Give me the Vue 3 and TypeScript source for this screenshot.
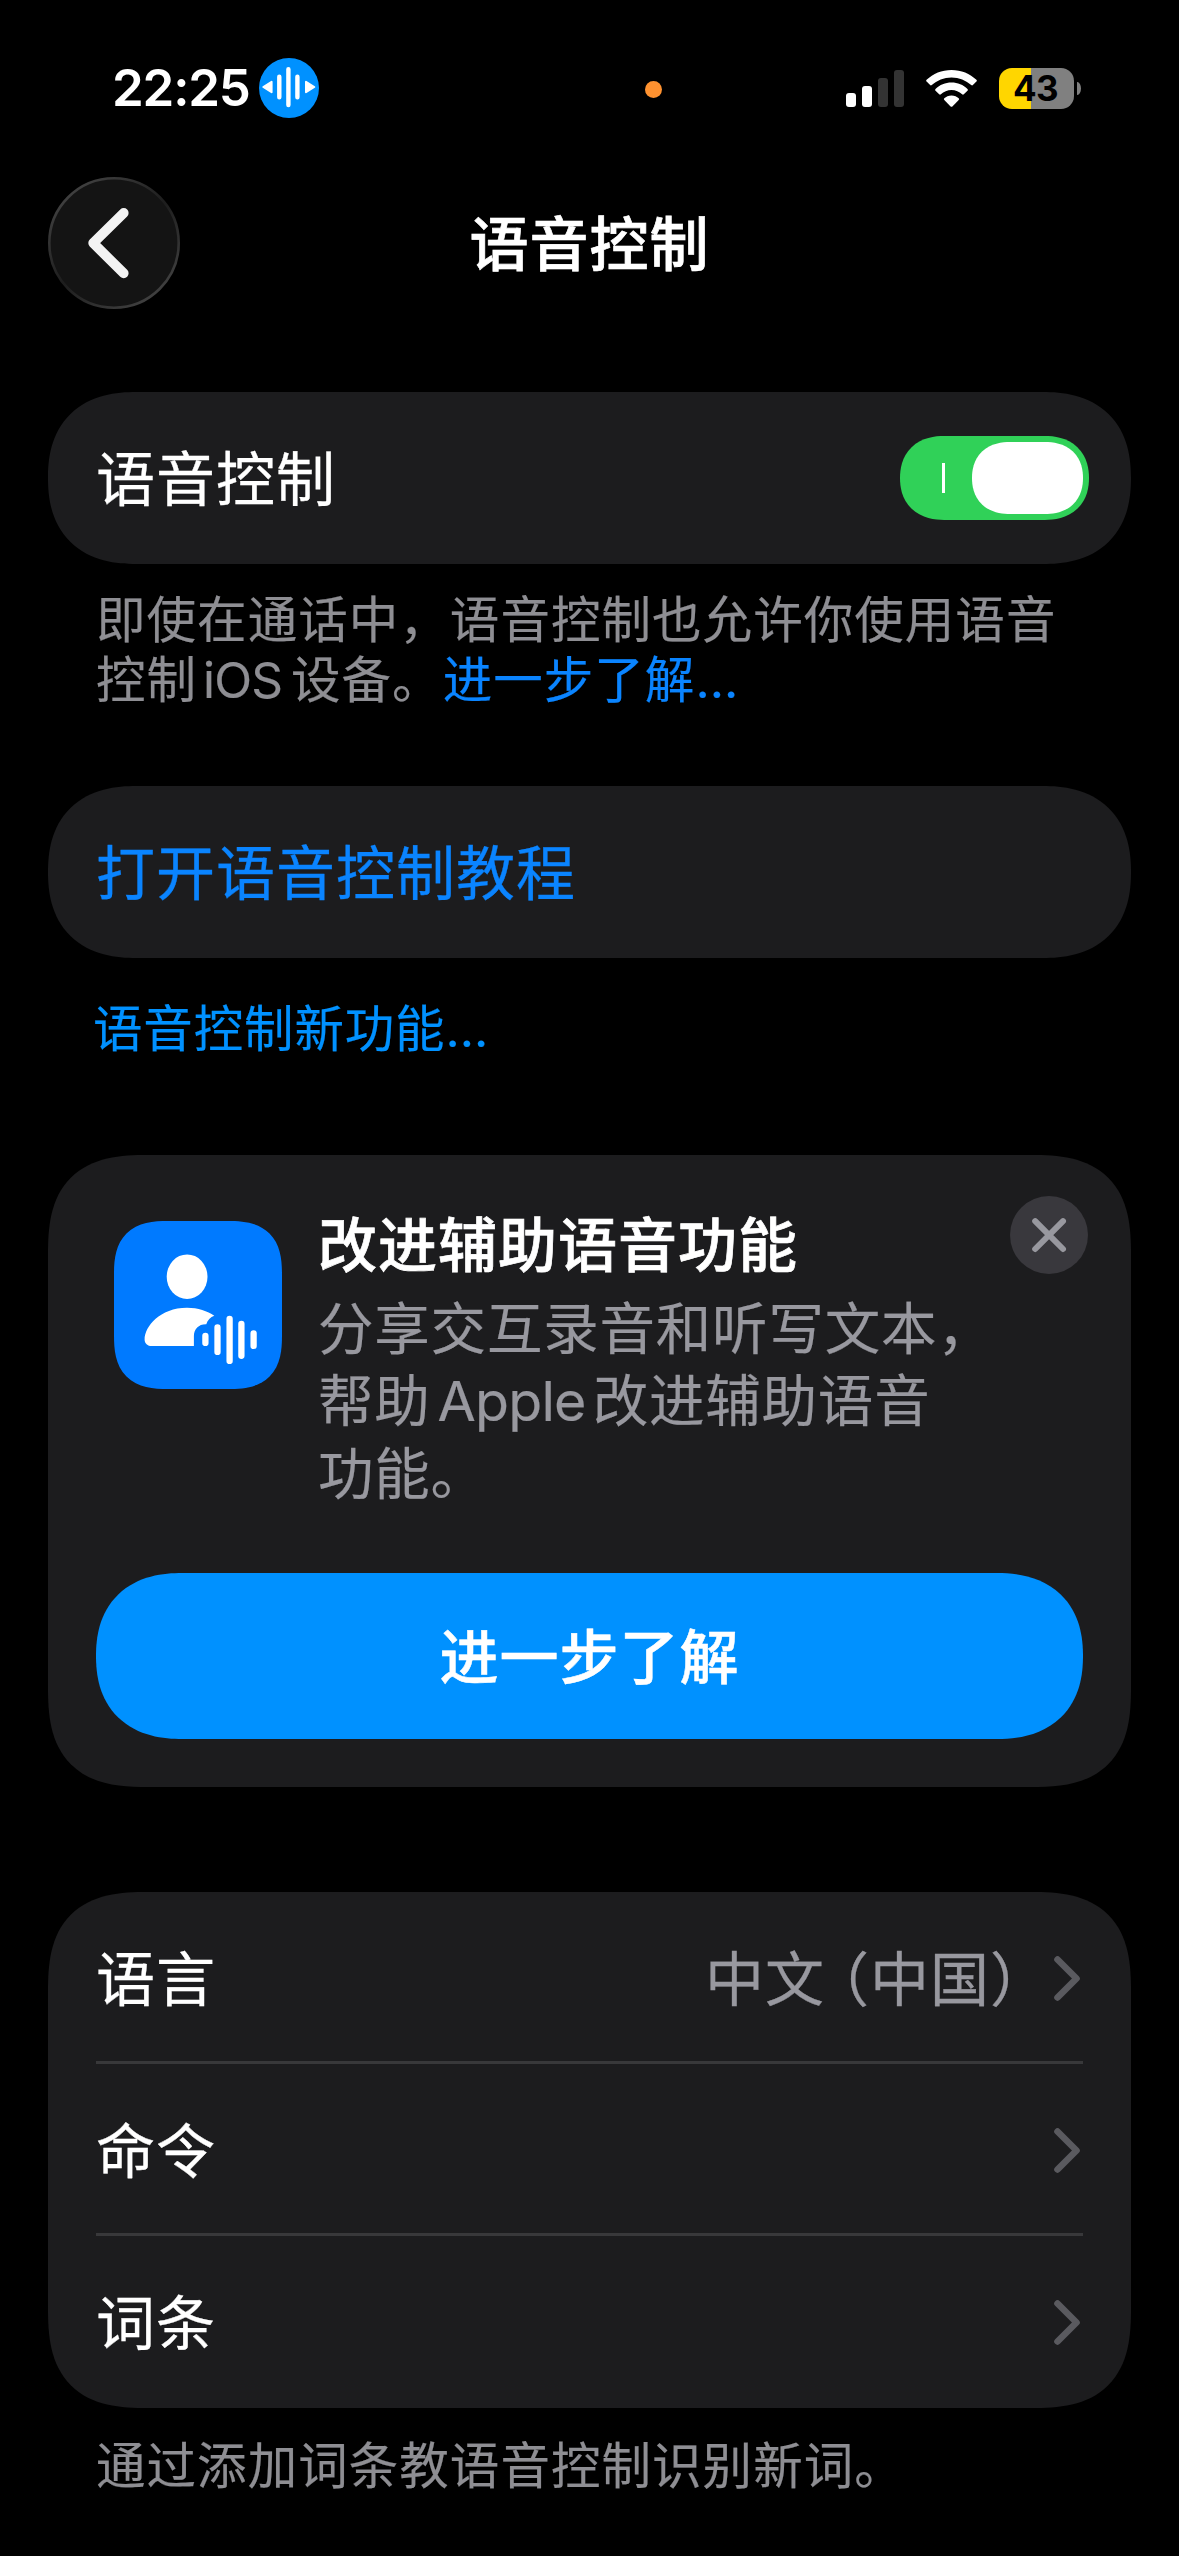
<script setup lang="ts">
interface Row {
  label: string
  language?: string
  region?: string
}

const rows: Row[] = [
  { label: '语言', language: '中文', region: '中国' },
  { label: '命令' },
  { label: '词条' },
]
</script>

<template>
  <div class="screen">
    <header class="status">
      <div class="status-left">
        <span class="time">22:25</span>
        <svg class="voice" viewBox="0 0 60 60">
          <circle cx="30" cy="30" r="30" fill="#0091ff" />
          <g stroke="#fff" stroke-width="4.4" stroke-linecap="round">
            <path d="M29.4 11.2V47M20.3 18.7V39.3M38.4 18.7V39.3" />
          </g>
          <g fill="#fff" stroke="#fff" stroke-width="2" stroke-linejoin="round">
            <path d="M4.3 29L12.6 23.8V34.2ZM55.3 29L47 23.8V34.2Z" />
          </g>
        </svg>
      </div>
      <span class="mic-dot"></span>
      <div class="status-right">
        <svg class="signal" viewBox="0 0 58 37">
          <rect x="0" y="23" width="10" height="14" rx="3" fill="#fff" />
          <rect x="16" y="16" width="10" height="21" rx="3" fill="#fff" />
          <rect x="32" y="8" width="10" height="29" rx="3" fill="#333" />
          <rect x="48" y="0" width="10" height="37" rx="3" fill="#333" />
        </svg>
        <svg class="wifi" viewBox="0 0 51 37">
          <g fill="#fff">
            <path d="M25.5 0C35.2 0 44 3.7 50.4 9.8Q51.3 10.7 50.4 11.6L46.9 15.1Q46.1 15.9 45.2 15.1C40 10.3 33.1 7.4 25.5 7.4C17.9 7.4 11 10.3 5.8 15.1Q4.9 15.9 4.1 15.1L.6 11.6Q-.3 10.7 .6 9.8C7 3.7 15.8 0 25.5 0Z" />
            <path d="M25.5 12.6C31.7 12.6 37.3 15 41.5 18.9Q42.4 19.8 41.5 20.7L37.8 24.3Q37 25.1 36.1 24.3C33.3 21.7 29.6 20.1 25.5 20.1C21.4 20.1 17.7 21.7 14.9 24.3Q14 25.1 13.2 24.3L9.5 20.7Q8.6 19.8 9.5 18.9C13.7 15 19.3 12.6 25.5 12.6Z" />
            <path d="M25.5 25.4C28.4 25.4 31 26.5 32.7 28.2Q33.5 29 32.7 29.9L26.4 36.4Q25.5 37.2 24.6 36.4L18.3 29.9Q17.5 29 18.3 28.2C20 26.5 22.6 25.4 25.5 25.4Z" />
          </g>
        </svg>
        <div class="battery"><span>43</span></div>
        <span class="battery-cap"></span>
      </div>
    </header>

    <nav class="nav">
      <button class="back" aria-label="返回">
        <svg viewBox="0 0 132 132">
          <defs>
            <linearGradient id="rim" x1="0.1" y1="0" x2="0.9" y2="1">
              <stop offset="0" stop-color="#484848" />
              <stop offset="0.5" stop-color="#1d1d1d" />
              <stop offset="1" stop-color="#484848" />
            </linearGradient>
          </defs>
          <circle cx="66" cy="66" r="64.7" fill="#141414" stroke="url(#rim)" stroke-width="2.6" />
          <path d="M75.7 36L45.2 66.1L75.7 96.3" fill="none" stroke="#f3f3f3" stroke-width="9.8" stroke-linecap="round" stroke-linejoin="round" />
        </svg>
      </button>
      <h1>语音控制</h1>
    </nav>

    <section class="card pill first">
      <span class="label">语音控制</span>
      <span class="toggle"><i class="on-mark"></i><i class="knob"></i></span>
    </section>
    <p class="note">即使在通话中，语音控制也允许你使用语音<br />控制<span class="ios">iOS</span>设备。<a>进一步了解<span class="dots">…</span></a></p>

    <section class="card pill tutorial">
      <span class="label link">打开语音控制教程</span>
    </section>
    <a class="news">语音控制新功能<span class="dots">…</span></a>

    <section class="card promo">
      <div class="promo-head">
        <svg class="app-icon" viewBox="0 0 168 168">
          <g fill="#fff">
            <ellipse cx="73.1" cy="55.7" rx="20.4" ry="22.3" />
            <path d="M38 125C33.5 125 30.6 122.4 30.6 118.4C30.6 105.5 46 86.7 73 86.7C84 86.7 93.5 90 100.3 94.7C96.5 96.2 93.3 99 92.3 103.3C85 103 79.9 108 79.9 115V125Z" />
          </g>
          <path d="M91.4 114.8V121.9M103.5 106.4V130.9M115.6 97.8V139.9M127.4 102.8V134.8M139.6 112.4V124.9" stroke="#fff" stroke-width="6.3" stroke-linecap="round" />
        </svg>
        <div class="promo-text">
          <h2>改进辅助语音功能</h2>
          <p>分享交互录音和听写文本，<br />帮助<span class="apple">Apple</span>改进辅助语音<br />功能。</p>
        </div>
        <button class="close" aria-label="关闭">
          <svg viewBox="0 0 78 78">
            <path d="M25.2 25.2L53 53M53 25.2L25.2 53" stroke="#98989f" stroke-width="6" stroke-linecap="round" />
          </svg>
        </button>
      </div>
      <button class="cta"><span>进一步了解</span></button>
    </section>

    <section class="card list">
      <div v-for="row in rows" :key="row.label" class="row">
        <span class="label">{{ row.label }}</span>
        <span v-if="row.language" class="value">{{ row.language }}<span class="paren">（</span>{{ row.region }}）</span>
        <svg class="chevron" viewBox="0 0 26 45">
          <path d="M3.5 3.5L22.5 22.5L3.5 41.5" fill="none" stroke="#5a5a5f" stroke-width="6.6" stroke-linecap="round" stroke-linejoin="round" />
        </svg>
      </div>
    </section>
    <p class="note tail">通过添加词条教语音控制识别新词。</p>
  </div>
</template>

<style>
html,
body {
  background: #000;
}
</style>

<style scoped>
.screen {
  box-sizing: border-box;
  width: 1179px;
  height: 2556px;
  padding: 0 48px;
  overflow: hidden;
  display: flex;
  flex-direction: column;
  background: #000;
  color: #fff;
  font-family: Inter, 'Noto Sans CJK SC', sans-serif;
}
h1,
h2,
p {
  margin: 0;
}
button {
  border: 0;
  padding: 0;
  background: none;
  color: inherit;
  font-family: inherit;
}
svg {
  display: block;
  flex: none;
}
.status {
  display: flex;
  align-items: center;
  height: 60px;
  margin-top: 58px;
  padding: 0 50px 0 64px;
  flex: none;
}
.status-left {
  display: flex;
  align-items: center;
  width: 533px;
}
.time {
  width: 147px;
  font-size: 51px;
  line-height: 60px;
  font-weight: 600;
  letter-spacing: -1.2px;
}
.voice {
  width: 60px;
  height: 60px;
}
.mic-dot {
  width: 17px;
  height: 17px;
  margin-top: 3px;
  border-radius: 50%;
  background: #ff9230;
}
.status-right {
  display: flex;
  align-items: center;
  margin-left: auto;
}
.signal {
  width: 58px;
  height: 37px;
  margin-right: 22px;
}
.wifi {
  width: 51px;
  height: 37px;
  margin-right: 22px;
}
.battery {
  box-sizing: border-box;
  width: 75px;
  height: 41px;
  padding-right: 2px;
  border-radius: 13px;
  background: linear-gradient(90deg, #ffd600 32px, #808080 32px);
  color: #000;
  text-align: center;
  font-size: 35px;
  line-height: 41px;
  font-weight: 650;
  letter-spacing: -0.6px;
}
.battery-cap {
  width: 4px;
  height: 13px;
  margin-left: 3px;
  border-radius: 0 4px 4px 0 / 0 7px 7px 0;
  background: #808080;
}
.nav {
  display: grid;
  grid-template-columns: 132px 1fr 132px;
  align-items: center;
  height: 132px;
  margin-top: 59px;
  flex: none;
}
.back,
.back svg {
  width: 132px;
  height: 132px;
}
h1,
h2 {
  font-size: 59px;
  font-weight: 500;
  letter-spacing: 1px;
  line-height: 72px;
  -webkit-text-stroke: 0.7px currentColor;
}
h1 {
  padding-top: 3px;
  text-align: center;
}
.card {
  flex: none;
  box-sizing: border-box;
  background: #1c1c1e;
  border-radius: 82px;
}
.pill {
  display: flex;
  align-items: center;
  justify-content: space-between;
  height: 172px;
  padding: 0 42px 0 48px;
  border-radius: 86px;
}
.first {
  margin-top: 83px;
}
.label,
.value {
  padding-top: 3px;
  font-size: 59px;
  letter-spacing: 1px;
  line-height: 72px;
  -webkit-text-stroke: 0.3px currentColor;
}
.link {
  color: #0a84ff;
}
.toggle {
  display: flex;
  align-items: center;
  justify-content: space-between;
  box-sizing: border-box;
  width: 189px;
  height: 84px;
  padding: 0 6px 0 42px;
  border-radius: 42px;
  background: #30d158;
}
.on-mark {
  width: 3px;
  height: 30px;
  background: #fff;
}
.knob {
  width: 111px;
  height: 72px;
  border-radius: 36px;
  background: #fff;
}
.note {
  flex: none;
  margin-top: 26px;
  padding-left: 48px;
  color: #8e8e93;
  font-size: 49.5px;
  line-height: 60px;
  letter-spacing: 1.05px;
  white-space: nowrap;
  -webkit-text-stroke: 0.2px currentColor;
}
.note a {
  color: #0a84ff;
}
.ios {
  margin: 0 9px 0 6px;
  letter-spacing: -0.9px;
}
.dots {
  letter-spacing: 0;
}
.note .dots {
  letter-spacing: -0.8px;
}
.tutorial {
  margin-top: 76px;
}
.news {
  flex: none;
  margin-top: 41px;
  padding-left: 45px;
  color: #0091ff;
  font-size: 49.5px;
  line-height: 60px;
  letter-spacing: 0.85px;
  -webkit-text-stroke: 0.2px currentColor;
}
.promo {
  height: 632px;
  margin-top: 96px;
  padding: 41px 43px 48px 48px;
  display: flex;
  flex-direction: column;
  justify-content: space-between;
}
.promo-head {
  display: flex;
  align-items: flex-start;
}
.app-icon {
  width: 168px;
  height: 168px;
  margin: 25px 36px 0 18px;
  border-radius: 44px;
  background: #007aff;
}
.promo-text {
  flex: 1;
  padding-top: 14px;
}
.promo-text p {
  margin-top: 11px;
  color: #98989f;
  font-size: 55.5px;
  line-height: 72.3px;
  letter-spacing: 0.8px;
  white-space: nowrap;
  -webkit-text-stroke: 0.2px currentColor;
}
.apple {
  margin: 0 7px 0 7px;
  letter-spacing: -0.8px;
}
.close {
  width: 78px;
  height: 78px;
  border-radius: 50%;
  background: #39383d;
}
.close svg {
  width: 78px;
  height: 78px;
}
.cta {
  width: 987px;
  height: 166px;
  padding-top: 3px;
  border-radius: 83px;
  background: #0091ff;
  font-size: 59px;
  line-height: 72px;
  font-weight: 500;
  letter-spacing: 1px;
  -webkit-text-stroke: 0.5px currentColor;
}
.list {
  margin-top: 105px;
  padding: 0 48px;
}
.row {
  display: flex;
  align-items: center;
  box-sizing: border-box;
  height: 172px;
  padding-right: 3px;
}
.row:not(:last-child) {
  background: linear-gradient(#38383a, #38383a) left bottom / 100% 3px no-repeat;
}
.value {
  margin-left: auto;
  margin-right: 4px;
  color: #98989f;
}
.paren {
  margin-left: 14.5px;
  font-feature-settings: 'halt' 1;
}
.chevron {
  width: 26px;
  height: 45px;
}
.label + .chevron {
  margin-left: auto;
}
.tail {
  margin-top: 28px;
}
@supports (corner-shape: superellipse(1.2)) {
  .card {
    border-radius: 100px;
    corner-shape: superellipse(1.42);
  }
  .pill {
    border-radius: 88px / 86px;
    corner-shape: superellipse(1.23);
  }
  .cta {
    border-radius: 86px / 83px;
    corner-shape: superellipse(1.21);
  }
  .toggle {
    border-radius: 44px / 42px;
    corner-shape: superellipse(1.17);
  }
  .knob {
    border-radius: 38px / 36px;
    corner-shape: superellipse(1.17);
  }
  .app-icon {
    border-radius: 54px;
    corner-shape: superellipse(1.4);
  }
}
</style>
